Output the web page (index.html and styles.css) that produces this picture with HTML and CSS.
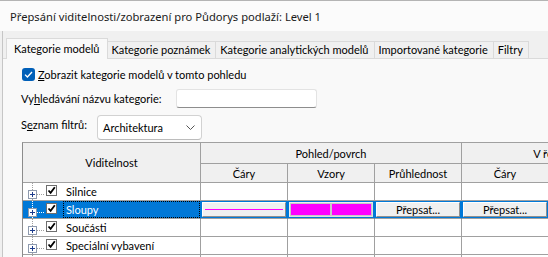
FILE: index.html
```html
<!DOCTYPE html>
<html lang="cs">
<head>
<meta charset="utf-8">
<title>Přepsání viditelnosti/zobrazení</title>
<link rel="stylesheet" href="styles.css">
</head>
<body>
<div class="window">
  <div class="titlebar">Přepsání viditelnosti/zobrazení pro Půdorys podlaží: Level 1</div>
  <div class="dialog">
    <div class="tabs">
      <div class="tab active">Kategorie modelů</div>
      <div class="tab">Kategorie poznámek</div>
      <div class="tab">Kategorie analytických modelů</div>
      <div class="tab">Importované kategorie</div>
      <div class="tab">Filtry</div>
    </div>
    <div class="pane">
      <div class="show-row">
        <span class="bluechk"><svg width="9" height="7" viewBox="0 0 9 7"><path d="M1 3.6L3.4 6L8 1" fill="none" stroke="#fff" stroke-width="1.3"/></svg></span>
        <span><u>Z</u>obrazit kategorie modelů v tomto pohledu</span>
      </div>
      <div class="search-row">
        <span class="search-label">Vy<u>h</u>ledávání názvu kategorie:</span>
        <span class="input"></span>
      </div>
      <div class="filter-row">
        <span class="filter-label">S<u>e</u>znam filtrů:</span>
        <div class="select">
          <span>Architektura</span>
          <svg width="9" height="5" viewBox="0 0 9 5"><path d="M0.5 0.5L4.5 4.5L8.5 0.5" fill="none" stroke="#555" stroke-width="1"/></svg>
        </div>
      </div>
      <div class="grid-wrap">
        <table class="grid">
          <colgroup>
            <col class="c-vis"><col class="c-n"><col class="c-n"><col class="c-n"><col class="c-n"><col class="c-n">
          </colgroup>
          <thead>
            <tr class="h1">
              <th rowspan="2">Viditelnost</th>
              <th colspan="3">Pohled/povrch</th>
              <th colspan="2">V řezu</th>
            </tr>
            <tr class="h2">
              <th>Čáry</th><th>Vzory</th><th>Průhlednost</th><th>Čáry</th><th>Vzory</th>
            </tr>
          </thead>
          <tbody>
            <tr>
              <td><div class="vis">
                <svg class="tree" width="21" height="17" viewBox="0 0 21 17"><path d="M9.5 0V7M9.5 16V17M14 11.5H21" stroke="#a0a0a0" stroke-dasharray="1 1"/><rect x="5.5" y="7.5" width="8" height="8" fill="#fff" stroke="#8e9aae"/><path d="M7 11.5H12M9.5 9V14" stroke="#1d3c8c"/></svg>
                <span class="cb"><svg width="9" height="9" viewBox="0 0 9 9"><path d="M1.5 4.5L3.6 6.8L7.8 1.2" fill="none" stroke="#000" stroke-width="1.8"/></svg></span>
                <span class="lbl">Silnice</span>
              </div></td>
              <td></td><td></td><td></td><td></td><td></td>
            </tr>
            <tr class="sel">
              <td><div class="vis">
                <svg class="tree" width="21" height="17" viewBox="0 0 21 17"><path d="M9.5 0V7M9.5 16V17M14 11.5H21" stroke="#ffffff" stroke-dasharray="1 1"/><rect x="5.5" y="7.5" width="8" height="8" fill="#fff" stroke="#8e9aae"/><path d="M7 11.5H12M9.5 9V14" stroke="#1d3c8c"/></svg>
                <span class="cb"><svg width="9" height="9" viewBox="0 0 9 9"><path d="M1.5 4.5L3.6 6.8L7.8 1.2" fill="none" stroke="#000" stroke-width="1.8"/></svg></span>
                <span class="lbl focus">Sloupy</span>
              </div></td>
              <td class="bcell"><div class="btn lines"><span class="line"></span></div></td>
              <td class="bcell"><div class="btn pat"><span class="fill"></span><span class="fill"></span></div></td>
              <td class="bcell"><div class="btn">Přepsat...</div></td>
              <td class="bcell"><div class="btn">Přepsat...</div></td>
              <td class="bcell"><div class="btn">Přepsat...</div></td>
            </tr>
            <tr>
              <td><div class="vis">
                <svg class="tree" width="21" height="17" viewBox="0 0 21 17"><path d="M9.5 0V7M9.5 16V17M14 11.5H21" stroke="#a0a0a0" stroke-dasharray="1 1"/><rect x="5.5" y="7.5" width="8" height="8" fill="#fff" stroke="#8e9aae"/><path d="M7 11.5H12M9.5 9V14" stroke="#1d3c8c"/></svg>
                <span class="cb"><svg width="9" height="9" viewBox="0 0 9 9"><path d="M1.5 4.5L3.6 6.8L7.8 1.2" fill="none" stroke="#000" stroke-width="1.8"/></svg></span>
                <span class="lbl">Součásti</span>
              </div></td>
              <td></td><td></td><td></td><td></td><td></td>
            </tr>
            <tr>
              <td><div class="vis">
                <svg class="tree" width="21" height="17" viewBox="0 0 21 17"><path d="M9.5 0V7M9.5 16V17M14 11.5H21" stroke="#a0a0a0" stroke-dasharray="1 1"/><rect x="5.5" y="7.5" width="8" height="8" fill="#fff" stroke="#8e9aae"/><path d="M7 11.5H12M9.5 9V14" stroke="#1d3c8c"/></svg>
                <span class="cb"><svg width="9" height="9" viewBox="0 0 9 9"><path d="M1.5 4.5L3.6 6.8L7.8 1.2" fill="none" stroke="#000" stroke-width="1.8"/></svg></span>
                <span class="lbl">Speciální vybavení</span>
              </div></td>
              <td></td><td></td><td></td><td></td><td></td>
            </tr>
            <tr>
              <td><div class="vis">
                <svg class="tree" width="21" height="17" viewBox="0 0 21 17"><path d="M9.5 0V7M9.5 16V17M14 11.5H21" stroke="#a0a0a0" stroke-dasharray="1 1"/><rect x="5.5" y="7.5" width="8" height="8" fill="#fff" stroke="#8e9aae"/><path d="M7 11.5H12M9.5 9V14" stroke="#1d3c8c"/></svg>
                <span class="cb"><svg width="9" height="9" viewBox="0 0 9 9"><path d="M1.5 4.5L3.6 6.8L7.8 1.2" fill="none" stroke="#000" stroke-width="1.8"/></svg></span>
                <span class="lbl">Stěny</span>
              </div></td>
              <td></td><td></td><td></td><td></td><td></td>
            </tr>
          </tbody>
        </table>
      </div>
    </div>
  </div>
</div>
</body>
</html>
```
FILE: styles.css
```css
html, body {
  margin: 0;
  padding: 0;
  width: 548px;
  height: 257px;
  overflow: hidden;
}
body {
  font-family: Lato, "Noto Sans", sans-serif;
  font-size: 11px;
  color: #000;
  background: #f0f0f0;
}
.window {
  height: 257px;
  box-sizing: border-box;
  border-top: 1px solid #b4b4b4;
  display: flex;
  flex-direction: column;
  overflow: hidden;
}
.titlebar {
  flex: none;
  height: 30px;
  background: #fbfbfb;
  padding-left: 10px;
  display: flex;
  align-items: center;
  color: #1a1a1a;
  font-family: "Noto Sans", sans-serif;
  font-size: 11.2px;
  white-space: nowrap;
}
.dialog {
  flex: 1;
  min-height: 0;
  margin-left: 2px;
  border-left: 1px solid #c6c6c6;
  display: flex;
  flex-direction: column;
}
.tabs {
  flex: none;
  height: 27px;
  display: flex;
  align-items: flex-end;
  padding-left: 3px;
}
.tab {
  height: 17px;
  box-sizing: border-box;
  line-height: 16px;
  padding: 0 5px 0 4px;
  border: 1px solid #dadada;
  border-bottom: none;
  margin-left: -1px;
  white-space: nowrap;
}
.tab.active {
  height: 21px;
  line-height: 19px;
  margin-left: 0;
  margin-bottom: -1px;
  padding: 0 7px;
  background: #f9f9f9;
  position: relative;
  z-index: 1;
}
.pane {
  flex: 1;
  min-height: 0;
  background: #f9f9f9;
  border-top: 1px solid #dadada;
  padding: 9px 0 0 18px;
  overflow: hidden;
  display: flex;
  flex-direction: column;
  align-items: flex-start;
}
.show-row {
  height: 13px;
  display: flex;
  align-items: center;
  gap: 3px;
  margin-left: 1px;
  white-space: nowrap;
}
.bluechk {
  width: 13px;
  height: 13px;
  border-radius: 3px;
  background: #005fb8;
  display: flex;
  align-items: center;
  justify-content: center;
}
.search-row {
  margin-top: 8px;
  height: 19px;
  display: flex;
  align-items: center;
}
.search-label {
  width: 155px;
  white-space: nowrap;
}
.input {
  width: 141px;
  height: 19px;
  box-sizing: border-box;
  background: #fff;
  border: 1px solid #e3e3e3;
  border-bottom-color: #8d8d8d;
  border-radius: 3px;
}
.filter-row {
  margin-top: 7px;
  display: flex;
  align-items: flex-start;
}
.filter-label {
  width: 76px;
  margin-top: 1px;
  line-height: 17px;
  white-space: nowrap;
}
.select {
  width: 105px;
  height: 25px;
  box-sizing: border-box;
  background: #fff;
  border: 1px solid #d2d2d2;
  border-bottom-color: #bcbcbc;
  border-radius: 4px;
  display: flex;
  align-items: center;
  justify-content: space-between;
  padding: 0 6px 0 5px;
}
.grid-wrap {
  margin-top: 2px;
  margin-left: 1px;
}
.grid {
  table-layout: fixed;
  border-collapse: separate;
  border-spacing: 0;
  border-left: 1px solid #8c8c8c;
  border-top: 1px solid #a0a0a0;
  width: 613px;
}
.c-vis { width: 178px; }
.c-n { width: 87px; }
.grid th, .grid td {
  padding: 0;
  box-sizing: border-box;
  border-right: 1px solid #a0a0a0;
  border-bottom: 1px solid #a0a0a0;
  white-space: nowrap;
  overflow: hidden;
}
.grid th {
  background: #f0f0f0;
  font-weight: normal;
  text-align: center;
}
.h1 th { height: 21px; }
.h2 th { height: 19px; }
.grid td {
  height: 18px;
  background: #fff;
}
.vis {
  height: 17px;
  display: flex;
  align-items: stretch;
}
.tree {
  flex: none;
  display: block;
}
.cb {
  flex: none;
  width: 11px;
  height: 11px;
  box-sizing: border-box;
  margin: 2px 0 0 2px;
  border: 1px solid #6e6e6e;
  background: #fff;
  display: flex;
  align-items: center;
  justify-content: center;
}
.lbl {
  flex: 1;
  margin-left: 6px;
  padding-left: 2px;
  border: 1px dotted transparent;
  display: flex;
  align-items: center;
  line-height: 15px;
}
.sel td {
  background: #0078d7;
  border-right-color: #0078d7;
}
.sel .lbl {
  color: #fff;
}
.lbl.focus {
  border-color: #000;
}
.bcell {
  padding: 1px 0 1px 1px !important;
}
.btn {
  height: 15px;
  box-sizing: border-box;
  background: #f0f0f0;
  border: 1px solid;
  border-color: #ffffff #8f8f8f #8f8f8f #ffffff;
  display: flex;
  align-items: center;
  justify-content: center;
  line-height: 13px;
  margin-right: 1px;
}
.btn.lines {
  align-items: flex-start;
}
.line {
  flex: 1;
  height: 1px;
  margin: 6px 2px 0;
  background: #ff00ff;
}
.btn.pat {
  background: #c8c8c8;
  padding: 1px;
  gap: 2px;
  border-color: #f0f0f0 #e0e0e0 #e0e0e0 #f0f0f0;
}
.fill {
  flex: 1;
  align-self: stretch;
  background: #ff00ff;
}
```
